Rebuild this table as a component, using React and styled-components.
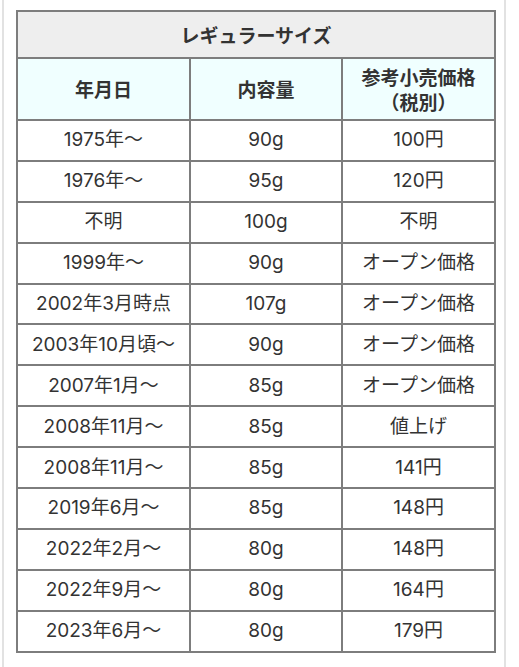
import styled, { createGlobalStyle } from "styled-components";

const GlobalStyle = createGlobalStyle`
  html, body {
    margin: 0;
    padding: 0;
    background: #ffffff;
  }
  body {
    font-family: Inter, "Noto Sans CJK JP", sans-serif;
    color: #333333;
  }
`;

const rows = [
  ["1975年〜", "90g", "100円"],
  ["1976年〜", "95g", "120円"],
  ["不明", "100g", "不明"],
  ["1999年〜", "90g", "オープン価格"],
  ["2002年3月時点", "107g", "オープン価格"],
  ["2003年10月頃〜", "90g", "オープン価格"],
  ["2007年1月〜", "85g", "オープン価格"],
  ["2008年11月〜", "85g", "値上げ"],
  ["2008年11月〜", "85g", "141円"],
  ["2019年6月〜", "85g", "148円"],
  ["2022年2月〜", "80g", "148円"],
  ["2022年9月〜", "80g", "164円"],
  ["2023年6月〜", "80g", "179円"],
];

function App() {
  return (
    <>
      <GlobalStyle />
      <Page>
        <Table>
          <colgroup>
            <col style={{ width: 173 }} />
            <col style={{ width: 152 }} />
            <col style={{ width: 153 }} />
          </colgroup>
          <thead>
            <tr>
              <Title colSpan={3}>レギュラーサイズ</Title>
            </tr>
            <tr>
              <Head>年月日</Head>
              <Head>内容量</Head>
              <Head>
                <HeadLine>参考小売価格</HeadLine>
                <HeadLine>（税別）</HeadLine>
              </Head>
            </tr>
          </thead>
          <tbody>
            {rows.map((r, i) => (
              <tr key={i}>
                <Cell>{r[0]}</Cell>
                <Cell>{r[1]}</Cell>
                <Cell>{r[2]}</Cell>
              </tr>
            ))}
          </tbody>
        </Table>
      </Page>
    </>
  );
}

export default App;

const Page = styled.div`
  margin-left: 2px;
  width: 504px;
  min-height: 667px;
  border-left: 2px solid #e2e2e2;
  border-right: 2px solid #e2e2e2;
  padding: 10px 0 0 12px;
  box-sizing: border-box;
`;

const Table = styled.table`
  border-collapse: collapse;
  width: 479px;
  table-layout: fixed;
  font-size: 19px;
`;

const Title = styled.th`
  background: #eeeeee;
  border: 2px solid #7d7d7d;
  height: 45px;
  padding: 0;
  font-family: "Noto Sans CJK JP", sans-serif;
  font-weight: 700;
  text-align: center;
`;

const Head = styled.th`
  background: #f0ffff;
  border: 2px solid #7d7d7d;
  height: 60px;
  padding: 0;
  font-family: "Noto Sans CJK JP", sans-serif;
  font-weight: 700;
  line-height: 24px;
  text-align: center;
`;

const HeadLine = styled.div`
  height: 24px;
  line-height: 24px;
  overflow: visible;
  & + & {
    margin-top: 1px;
  }
`;

const Cell = styled.td`
  border: 2px solid #7d7d7d;
  height: 38.9px;
  padding: 0;
  text-align: center;
  line-height: 24px;
`;
